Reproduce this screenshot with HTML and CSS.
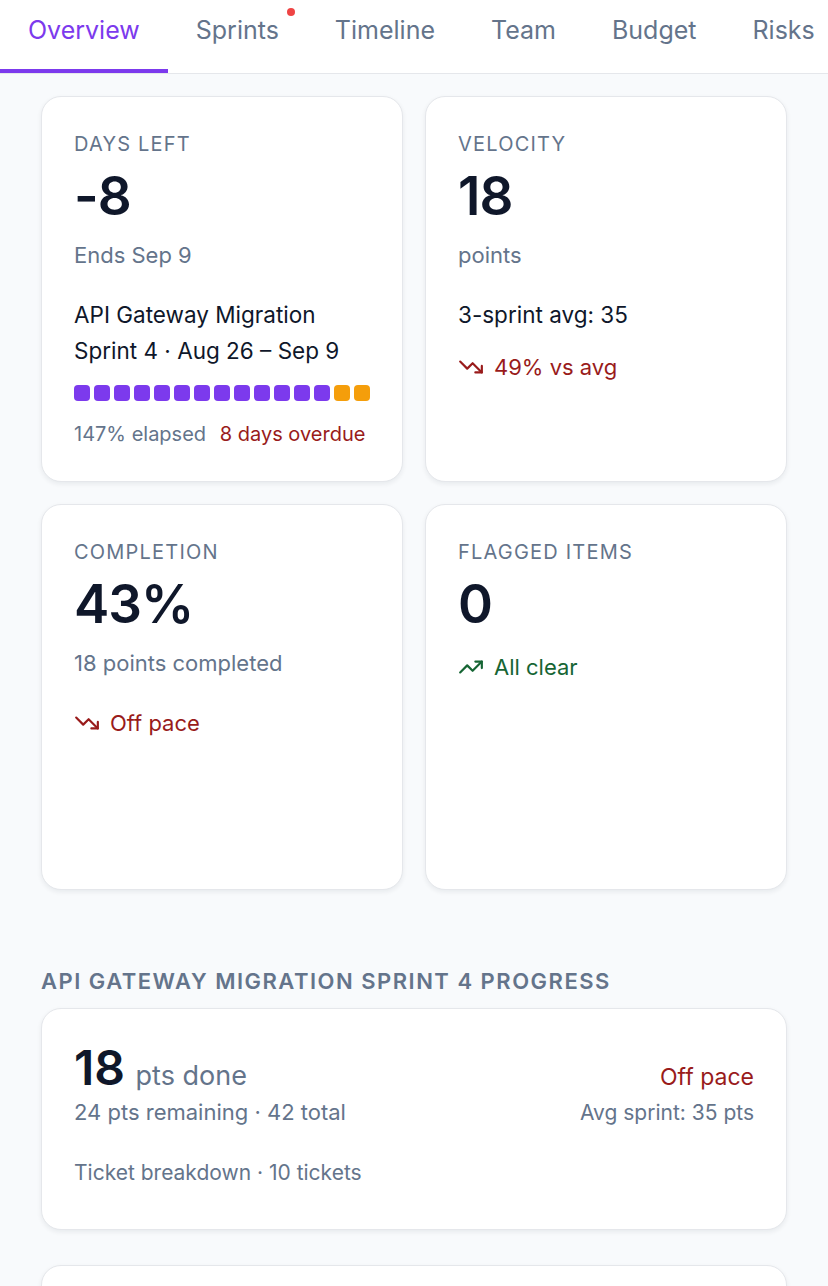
FILE: index.html
```html
<!DOCTYPE html>
<html lang="en">
<head>
    <meta charset="UTF-8">
    <meta name="viewport" content="width=device-width, initial-scale=1.0">
    <title>Sprint Overview</title>
    <link rel="stylesheet" href="styles.css">
</head>
<body>
    <nav class="tabs">
        <a class="tab active">Overview</a>
        <a class="tab">Sprints<span class="dot"></span></a>
        <a class="tab">Timeline</a>
        <a class="tab">Team</a>
        <a class="tab">Budget</a>
        <a class="tab">Risks</a>
    </nav>

    <main class="page">
        <div class="stats">
            <div class="card">
                <div class="label">Days left</div>
                <div class="value">-8</div>
                <div class="sub">Ends Sep 9</div>
                <div class="detail">API Gateway Migration<br>Sprint 4 · Aug 26 – Sep 9</div>
                <div class="days">
                    <span class="day"></span><span class="day"></span><span class="day"></span>
                    <span class="day"></span><span class="day"></span><span class="day"></span>
                    <span class="day"></span><span class="day"></span><span class="day"></span>
                    <span class="day"></span><span class="day"></span><span class="day"></span>
                    <span class="day"></span><span class="day over"></span><span class="day over"></span>
                </div>
                <div class="foot">
                    <span class="muted">147% elapsed</span>
                    <span class="bad">8 days overdue</span>
                </div>
            </div>

            <div class="card">
                <div class="label">Velocity</div>
                <div class="value">18</div>
                <div class="sub">points</div>
                <div class="detail">3-sprint avg: 35</div>
                <div class="trend bad near">
                    <svg viewBox="0 0 24 24"><polyline points="22 17 13.5 8.5 8.5 13.5 2 7"/><polyline points="16 17 22 17 22 11"/></svg>
                    49% vs avg
                </div>
            </div>

            <div class="card">
                <div class="label">Completion</div>
                <div class="value">43%</div>
                <div class="sub">18 points completed</div>
                <div class="trend bad">
                    <svg viewBox="0 0 24 24"><polyline points="22 17 13.5 8.5 8.5 13.5 2 7"/><polyline points="16 17 22 17 22 11"/></svg>
                    Off pace
                </div>
            </div>

            <div class="card">
                <div class="label">Flagged items</div>
                <div class="value">0</div>
                <div class="trend good tight">
                    <svg viewBox="0 0 24 24"><polyline points="22 7 13.5 15.5 8.5 10.5 2 17"/><polyline points="16 7 22 7 22 13"/></svg>
                    All clear
                </div>
            </div>
        </div>

        <h2 class="section-title">API Gateway Migration Sprint 4 Progress</h2>
        <div class="card progress">
            <div class="progress-row">
                <div><span class="big">18</span> <span class="big-unit">pts done</span></div>
                <div class="bad pace">Off pace</div>
            </div>
            <div class="progress-row small">
                <div>24 pts remaining · 42 total</div>
                <div class="avg">Avg sprint: 35 pts</div>
            </div>
            <div class="tickets">Ticket breakdown · 10 tickets</div>
        </div>

        <div class="card next"></div>
    </main>
</body>
</html>
```

FILE: styles.css
```css
body {
    margin: 0;
    font-family: Inter, "Noto Sans", sans-serif;
    background: #f8fafc;
    color: #0f172a;
}
.tabs {
    display: flex;
    background: #fff;
    border-bottom: 1px solid #e5e7eb;
    overflow: hidden;
    white-space: nowrap;
}
.tab {
    position: relative;
    padding: 12px 28px 21px;
    font-size: 25px;
    line-height: 36px;
    color: #64748b;
    border-bottom: 4px solid transparent;
}
.tab.active {
    color: #7c3aed;
    border-bottom-color: #7c3aed;
}
.dot {
    position: absolute;
    top: 8px;
    right: 12px;
    width: 8px;
    height: 8px;
    border-radius: 50%;
    background: #ef4444;
}
.page {
    padding: 22px 41px;
}
.stats {
    display: grid;
    grid-template-columns: 1fr 1fr;
    grid-auto-rows: 1fr;
    gap: 22px;
}
.card {
    background: #fff;
    border: 1px solid #e5e7eb;
    border-radius: 20px;
    box-shadow: 0 2px 5px rgba(15, 23, 42, 0.07);
    padding: 31px 32px 33px;
}
.label {
    font-size: 20px;
    line-height: 32px;
    letter-spacing: 1.2px;
    text-transform: uppercase;
    color: #64748b;
}
.value {
    margin-top: 4px;
    font-size: 53px;
    line-height: 64px;
    font-weight: 600;
    letter-spacing: -1px;
}
.sub {
    margin-top: 11px;
    font-size: 22px;
    line-height: 32px;
    color: #64748b;
}
.detail {
    margin-top: 26px;
    font-size: 22.5px;
    line-height: 36px;
}
.days {
    display: flex;
    gap: 4px;
    margin-top: 16px;
}
.day {
    width: 16px;
    height: 16px;
    border-radius: 4px;
    background: #7c3aed;
}
.day.over {
    background: #f59e0b;
}
.foot {
    margin-top: 19px;
    font-size: 20px;
    line-height: 28px;
}
.foot .muted {
    margin-right: 8px;
}
.muted {
    color: #64748b;
}
.bad {
    color: #991b1b;
}
.good {
    color: #166534;
}
.trend {
    display: flex;
    align-items: center;
    gap: 10px;
    margin-top: 26px;
    font-size: 22px;
    line-height: 36px;
}
.trend.near {
    margin-top: 16px;
}
.trend.tight {
    margin-top: 13px;
}
.trend svg {
    width: 26px;
    height: 26px;
    fill: none;
    stroke: currentColor;
    stroke-width: 2;
    stroke-linecap: round;
    stroke-linejoin: round;
}
.section-title {
    margin: 77px 0 13px;
    font-size: 22px;
    line-height: 28px;
    font-weight: 600;
    letter-spacing: 1.5px;
    text-transform: uppercase;
    color: #64748b;
}
.progress {
    padding: 31px 32px 42px;
}
.progress-row {
    display: flex;
    justify-content: space-between;
    align-items: baseline;
}
.big {
    font-size: 48px;
    line-height: 56px;
    font-weight: 600;
}
.big-unit {
    margin-left: 6px;
    font-size: 27px;
    color: #64748b;
}
.pace {
    font-size: 23px;
}
.progress-row.small {
    font-size: 22px;
    line-height: 32px;
    color: #64748b;
}
.avg {
    font-size: 21px;
}
.tickets {
    margin-top: 30px;
    font-size: 21px;
    line-height: 28px;
    color: #64748b;
}
.next {
    margin-top: 35px;
    height: 80px;
}
```
